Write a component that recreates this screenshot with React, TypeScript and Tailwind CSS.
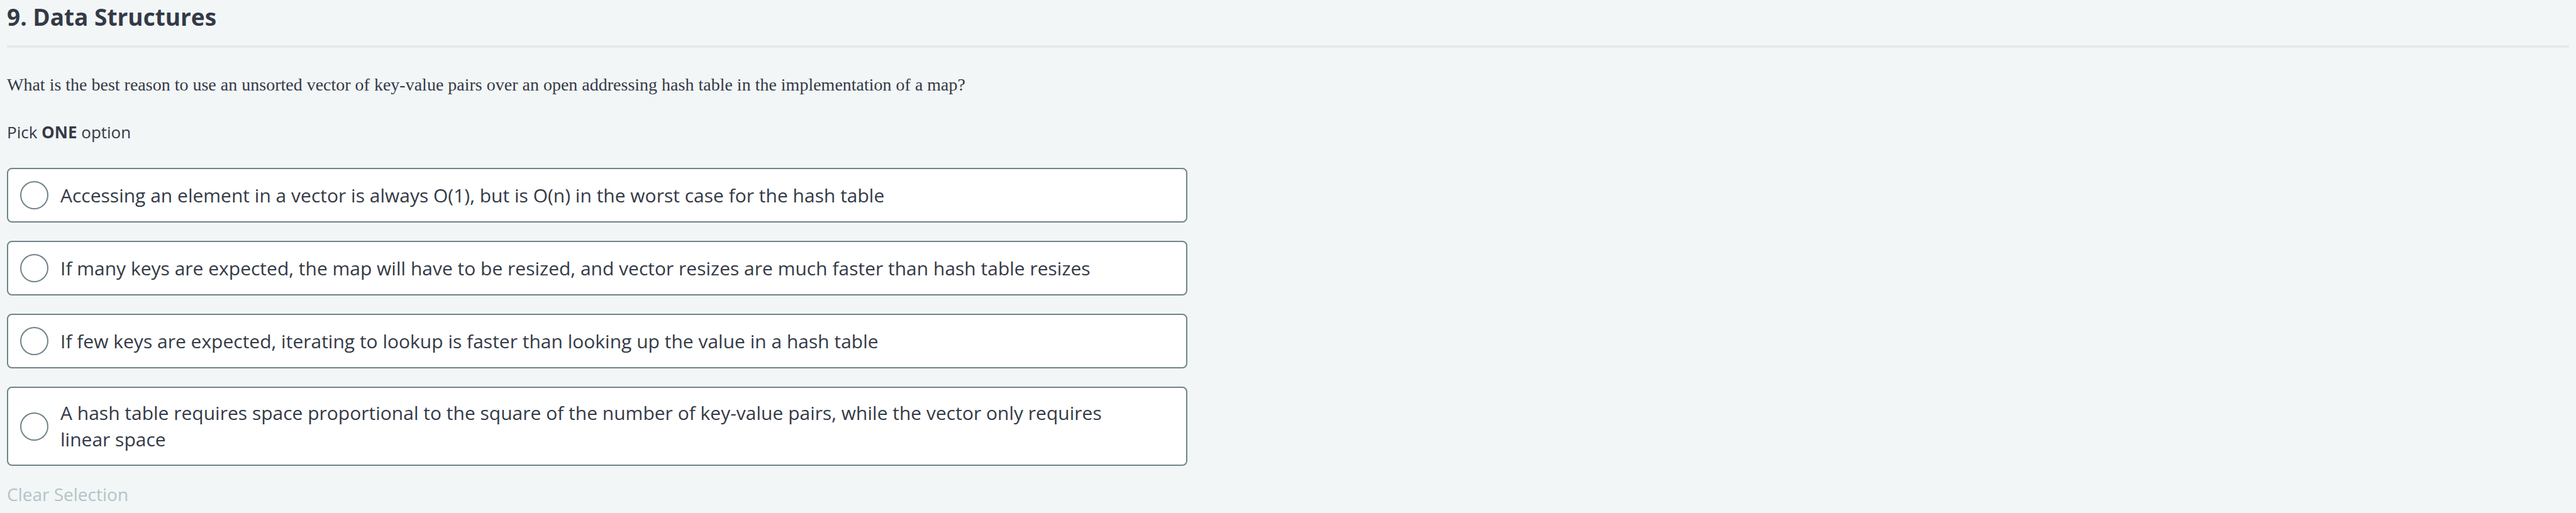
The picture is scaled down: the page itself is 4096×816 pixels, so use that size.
import { useState } from "react";

const OPTIONS = [
  "Accessing an element in a vector is always O(1), but is O(n) in the worst case for the hash table",
  "If many keys are expected, the map will have to be resized, and vector resizes are much faster than hash table resizes",
  "If few keys are expected, iterating to lookup is faster than looking up the value in a hash table",
  "A hash table requires space proportional to the square of the number of key-value pairs, while the vector only requires linear space",
];

export default function App() {
  const [selected, setSelected] = useState<number | null>(null);

  return (
    <main className="min-h-screen bg-[#f2f6f7] px-[11px] font-['Open_Sans',sans-serif] text-[#343a46]">
      <h1 className="border-b-4 border-[#e6eaea] pb-[18px] text-[37px] leading-[54px] font-bold">
        9. Data Structures
      </h1>
      <p className="mt-[38px] font-['Liberation_Serif',serif] text-[28px] leading-[42px]">
        What is the best reason to use an unsorted vector of key-value pairs over an open addressing hash table in the
        implementation of a map?
      </p>
      <fieldset className="mt-[33px] max-w-[1877px]">
        <legend className="text-[26px] leading-[42px]">
          Pick <strong className="font-bold">ONE</strong> option
        </legend>
        <div className="mt-[36px] flex flex-col gap-[29px]">
          {OPTIONS.map((option, index) => (
            <label
              key={option}
              className="flex cursor-pointer items-center gap-[19px] rounded-[8px] border-2 border-[#6f8488] bg-white px-[19px] py-[19px]"
            >
              <input
                type="radio"
                name="answer"
                checked={selected === index}
                onChange={() => setSelected(index)}
                className="size-[45px] shrink-0 appearance-none rounded-full border-2 border-[#6f8488] bg-white checked:border-[12px]"
              />
              <span className="mr-[96px] text-[30px] leading-[42px]">{option}</span>
            </label>
          ))}
        </div>
      </fieldset>
      <button
        type="button"
        disabled={selected === null}
        onClick={() => setSelected(null)}
        className="mt-[24px] block text-[28px] leading-[42px] text-[#6f8488] disabled:text-[#b4c3c7]"
      >
        Clear Selection
      </button>
    </main>
  );
}
